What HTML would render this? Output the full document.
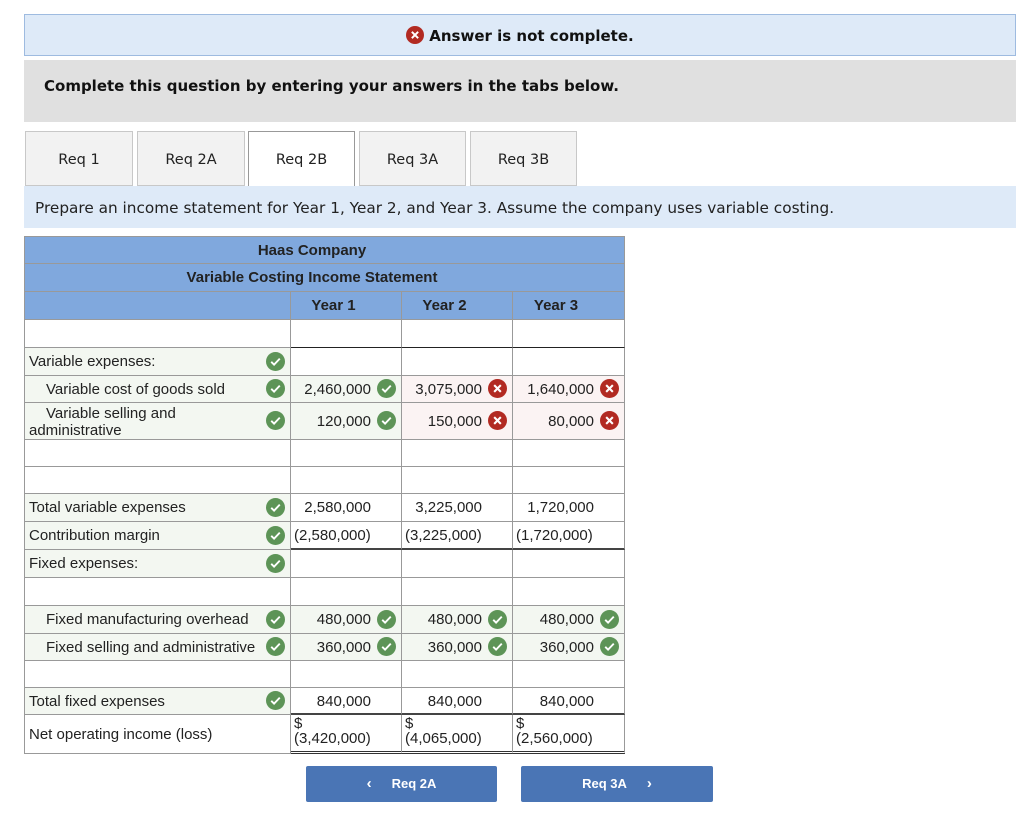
<!DOCTYPE html>
<html><head><meta charset="utf-8"><style>
body{margin:0;width:1024px;height:839px;background:#fff;font-family:"DejaVu Sans","Liberation Sans",sans-serif;position:relative;overflow:hidden}
.ab{position:absolute}
.banner{left:24px;top:14px;width:990px;height:40px;background:#deeaf8;border:1px solid #9ebbe0;text-align:center;font-weight:bold;font-size:15px;line-height:42px;color:#111}
.gray{left:24px;top:60px;width:992px;height:62px;background:#e0e0e0;font-weight:bold;font-size:15px;line-height:52px;padding-left:20px;box-sizing:border-box;color:#111}
.tab{top:131px;height:55px;width:106px;background:#f2f2f2;border:1px solid #c8c8c8;box-sizing:border-box;font-size:14.5px;text-align:center;line-height:56px;color:#222}
.tab.on{background:#fff;border-color:#999;border-bottom:none;height:56px}
.instr{left:24px;top:186px;width:992px;height:42px;background:#deeaf8;font-size:15.3px;line-height:44px;padding-left:11px;box-sizing:border-box;color:#222}
.tbl{left:24px;top:236px;width:600px;border-left:1px solid #999;border-top:1px solid #999;font-family:"Liberation Sans",sans-serif;font-size:15px;color:#222}
.r{display:flex;box-sizing:border-box}
.r>div{box-sizing:border-box;border-right:1px solid #999;border-bottom:1px solid #999;position:relative;height:100%}
.c0{width:266px;padding-left:4px}
.c1,.c2{width:111px}.c3{width:112px}
.hd{background:#80a8dd;font-weight:bold;text-align:center}
.hd>div{padding-right:25px}
.hd>.c0{padding:0}
.g{background:#f3f7f1}.p{background:#fbf3f3}
.v{text-align:right;padding-right:30px}
.i{position:absolute;width:19px;height:19px;top:50%;margin-top:-10px;right:5px}
.in{padding-left:21px}
.btn{top:766px;height:36px;width:191px;background:#4a75b5;border-radius:2px;color:#fff;font-weight:bold;font-size:13px;line-height:36px;text-align:center;font-family:"Liberation Sans",sans-serif}
</style></head><body>
<div class="ab banner"><svg width="18" height="18" viewBox="0 0 20 20" style="vertical-align:-3px;margin-right:5px"><circle cx="10" cy="10" r="10" fill="#b22a22"/><path d="M6.5 6.5l7 7M13.5 6.5l-7 7" stroke="#fff" stroke-width="2.2"/></svg>Answer is not complete.</div>
<div class="ab gray">Complete this question by entering your answers in the tabs below.</div>
<div class="ab tab" style="left:25px;width:108px">Req 1</div>
<div class="ab tab" style="left:137px;width:108px">Req 2A</div>
<div class="ab tab on" style="left:248px;width:107px">Req 2B</div>
<div class="ab tab" style="left:359px;width:107px">Req 3A</div>
<div class="ab tab" style="left:470px;width:107px">Req 3B</div>
<div class="ab instr">Prepare an income statement for Year 1, Year 2, and Year 3. Assume the company uses variable costing.</div>

<svg width="0" height="0" style="position:absolute"><defs>
<symbol id="ok" viewBox="0 0 20 20"><circle cx="10" cy="10" r="10" fill="#5d9457"/><path d="M5.5 10.3l3 3 6-6.3" stroke="#fff" stroke-width="2" fill="none"/></symbol>
<symbol id="no" viewBox="0 0 20 20"><circle cx="10" cy="10" r="10" fill="#b22a22"/><path d="M6.5 6.5l7 7M13.5 6.5l-7 7" stroke="#fff" stroke-width="2.2"/></symbol>
</defs></svg>

<div class="ab tbl">
<div class="r hd" style="height:27px;line-height:27px"><div style="width:600px">Haas Company</div></div>
<div class="r hd" style="height:28px;line-height:28px"><div style="width:600px">Variable Costing Income Statement</div></div>
<div class="r hd" style="height:28px;line-height:28px"><div class="c0"></div><div class="c1">Year 1</div><div class="c2">Year 2</div><div class="c3">Year 3</div></div>
<div class="r" style="height:28px"><div class="c0"></div><div class="c1" style="border-bottom:1px solid #222"></div><div class="c2" style="border-bottom:1px solid #222"></div><div class="c3" style="border-bottom:1px solid #222"></div></div>
<div class="r" style="height:28px;line-height:28px"><div class="c0 g">Variable expenses:<svg class="i"><use href="#ok"/></svg></div><div class="c1"></div><div class="c2"></div><div class="c3"></div></div>
<div class="r" style="height:27px;line-height:27px"><div class="c0 g in">Variable cost of goods sold<svg class="i"><use href="#ok"/></svg></div><div class="c1 g v">2,460,000<svg class="i"><use href="#ok"/></svg></div><div class="c2 p v">3,075,000<svg class="i"><use href="#no"/></svg></div><div class="c3 p v">1,640,000<svg class="i"><use href="#no"/></svg></div></div>
<div class="r" style="height:37px;line-height:37px"><div class="c0 g" style="line-height:17px;padding-top:2px"><span style="padding-left:17px">Variable selling and</span><br>administrative<svg class="i"><use href="#ok"/></svg></div><div class="c1 g v">120,000<svg class="i"><use href="#ok"/></svg></div><div class="c2 p v">150,000<svg class="i"><use href="#no"/></svg></div><div class="c3 p v">80,000<svg class="i"><use href="#no"/></svg></div></div>
<div class="r" style="height:27px"><div class="c0"></div><div class="c1"></div><div class="c2"></div><div class="c3"></div></div>
<div class="r" style="height:27px"><div class="c0"></div><div class="c1"></div><div class="c2"></div><div class="c3"></div></div>
<div class="r" style="height:28px;line-height:28px"><div class="c0 g">Total variable expenses<svg class="i"><use href="#ok"/></svg></div><div class="c1 v">2,580,000</div><div class="c2 v">3,225,000</div><div class="c3 v">1,720,000</div></div>
<div class="r" style="height:28px;line-height:28px"><div class="c0 g">Contribution margin<svg class="i"><use href="#ok"/></svg></div><div class="c1" style="padding-left:3px;border-bottom:2px solid #444">(2,580,000)</div><div class="c2" style="padding-left:3px;border-bottom:2px solid #444">(3,225,000)</div><div class="c3" style="padding-left:3px;border-bottom:2px solid #444">(1,720,000)</div></div>
<div class="r" style="height:28px;line-height:28px"><div class="c0 g">Fixed expenses:<svg class="i"><use href="#ok"/></svg></div><div class="c1"></div><div class="c2"></div><div class="c3"></div></div>
<div class="r" style="height:28px"><div class="c0"></div><div class="c1"></div><div class="c2"></div><div class="c3"></div></div>
<div class="r" style="height:28px;line-height:28px"><div class="c0 g in">Fixed manufacturing overhead<svg class="i"><use href="#ok"/></svg></div><div class="c1 g v">480,000<svg class="i"><use href="#ok"/></svg></div><div class="c2 g v">480,000<svg class="i"><use href="#ok"/></svg></div><div class="c3 g v">480,000<svg class="i"><use href="#ok"/></svg></div></div>
<div class="r" style="height:27px;line-height:27px"><div class="c0 g in">Fixed selling and administrative<svg class="i"><use href="#ok"/></svg></div><div class="c1 g v">360,000<svg class="i"><use href="#ok"/></svg></div><div class="c2 g v">360,000<svg class="i"><use href="#ok"/></svg></div><div class="c3 g v">360,000<svg class="i"><use href="#ok"/></svg></div></div>
<div class="r" style="height:27px"><div class="c0"></div><div class="c1"></div><div class="c2"></div><div class="c3"></div></div>
<div class="r" style="height:27px;line-height:27px"><div class="c0 g">Total fixed expenses<svg class="i"><use href="#ok"/></svg></div><div class="c1 v" style="border-bottom:2px solid #444">840,000</div><div class="c2 v" style="border-bottom:2px solid #444">840,000</div><div class="c3 v" style="border-bottom:2px solid #444">840,000</div></div>
<div class="r" style="height:39px"><div class="c0" style="line-height:39px">Net operating income (loss)</div><div class="c1" style="line-height:15px;padding:1px 0 0 3px;border-bottom:3px double #333">$<br>(3,420,000)</div><div class="c2" style="line-height:15px;padding:1px 0 0 3px;border-bottom:3px double #333">$<br>(4,065,000)</div><div class="c3" style="line-height:15px;padding:1px 0 0 3px;border-bottom:3px double #333">$<br>(2,560,000)</div></div>
</div>

<div class="ab btn" style="left:306px"><span style="margin-right:20px;font-size:15px">&#8249;</span>Req 2A</div>
<div class="ab btn" style="left:521px;width:192px">Req 3A<span style="margin-left:20px;font-size:15px">&#8250;</span></div>
</body></html>
